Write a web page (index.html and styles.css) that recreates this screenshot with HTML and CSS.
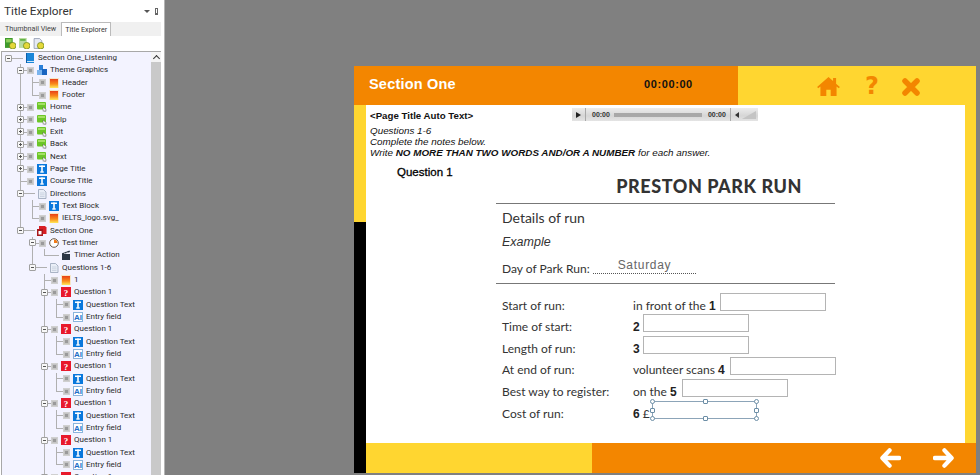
FILE: index.html
```html
<!DOCTYPE html>
<html lang="en">
<head>
<meta charset="utf-8">
<title>Title Explorer</title>
<link rel="stylesheet" href="styles.css">
</head>
<body>
<svg class="defs" aria-hidden="true">
  <defs>
    <linearGradient id="fl" x1="0" y1="0" x2="0" y2="1"><stop offset="0" stop-color="#e8401a"/><stop offset=".55" stop-color="#f98a1a"/><stop offset="1" stop-color="#ffe95a"/></linearGradient>
    <symbol id="book" viewBox="0 0 10 10"><rect x="1" y="0" width="8" height="10" fill="#1a86d8"/><rect x="1" y="8" width="8" height="1" fill="#cfe6f8"/><rect x="1" y="0" width="1" height="10" fill="#0c5ea8"/></symbol>
    <symbol id="theme" viewBox="0 0 10 10"><rect x="2" y="0" width="4" height="5" fill="#2a7fd8"/><rect x="0" y="5" width="5" height="5" fill="#7ab4ee"/><rect x="5" y="4" width="5" height="6" fill="#1864c0"/></symbol>
    <symbol id="flame" viewBox="0 0 10 10"><rect width="10" height="10" fill="#f6e6c8"/><rect x="1" y="1" width="8" height="9" fill="url(#fl)"/></symbol>
    <symbol id="btn" viewBox="0 0 10 10"><rect x="0" y="0" width="9" height="7.500" rx="1" fill="#6cc628"/><rect x="1" y="1" width="7" height="2" fill="#a4e064"/><path d="M6 5l3.500 3-1.500.2.800 1.500-1 .3-.700-1.500-1 .8z" fill="#fff" stroke="#444" stroke-width=".4"/></symbol>
    <symbol id="tee" viewBox="0 0 10 10"><rect width="10" height="10" fill="#0a78dc"/><rect x="2" y="1.500" width="6" height="1.500" fill="#fff"/><rect x="4.200" y="1.500" width="1.600" height="7" fill="#fff"/><rect x="3" y="7.500" width="4" height="1" fill="#fff"/></symbol>
    <symbol id="page" viewBox="0 0 10 10"><path d="M1.500.5h5l2.500 2.500v6.500h-7.500z" fill="#e9eef7" stroke="#97a3b8" stroke-width=".8"/><path d="M3 4h4.500M3 5.800h4.500M3 7.500h4.500" stroke="#b8c2d4" stroke-width=".6"/></symbol>
    <symbol id="sect" viewBox="0 0 10 10"><path d="M2 0h6l1.500 1.500v6.500h-7.500z" fill="#d81e24"/><path d="M0 3h6v7h-6z" fill="#a8181c"/><path d="M1.500 5h3v3.500h-3z" fill="#fff"/></symbol>
    <symbol id="timer" viewBox="0 0 10 10"><circle cx="5" cy="5" r="4.300" fill="#fff" stroke="#6a5a4a"/><path d="M5 5V1.500A3.500 3.500 0 0 1 8.500 5z" fill="#f07a18"/></symbol>
    <symbol id="clap" viewBox="0 0 10 10"><rect x="1" y="4" width="8" height="6" fill="#2c3644"/><path d="M1 3.300L8.500.5l.5 1.500-8 2.500z" fill="#2c3644"/><path d="M3 2.500l1 1.400M5.500 1.600l1 1.400" stroke="#fff" stroke-width=".6"/></symbol>
    <symbol id="quest" viewBox="0 0 10 10"><rect width="10" height="10" fill="#e8192c"/><text x="5" y="8.600" text-anchor="middle" class="qmark">?</text></symbol>
    <symbol id="entry" viewBox="0 0 10 10"><rect x=".5" y=".5" width="9" height="9" fill="#fff" stroke="#8ab4dc"/><text x="1" y="8" class="emark">AI</text></symbol>
    <symbol id="add-g" viewBox="0 0 10 10"><rect x="0" y="0" width="7" height="9" fill="#3f9a2c"/><rect x="1" y="1" width="5" height="3" fill="#8ed05a"/><circle cx="7" cy="7" r="3" fill="#e4d83a" stroke="#5c7a10" stroke-width=".6"/></symbol>
    <symbol id="add-l" viewBox="0 0 10 10"><rect x="0" y="0" width="7" height="9" fill="#b8dca0"/><rect x="1" y="1" width="5" height="1.500" fill="#5cae3c"/><circle cx="7" cy="7" r="3" fill="#e4d83a" stroke="#5c7a10" stroke-width=".6"/></symbol>
    <symbol id="add-p" viewBox="0 0 10 10"><path d="M1 .5h5l2 2v7h-7z" fill="#e6eaf4" stroke="#8a96aa" stroke-width=".7"/><circle cx="7" cy="7" r="3" fill="#e4d83a" stroke="#5c7a10" stroke-width=".6"/></symbol>
  </defs>
</svg>

<div class="app">
  <aside class="panel">
    <header class="panel-head">
      <h1>Title Explorer</h1>
      <span class="panel-ctl"><i class="caret"></i><i class="pin"></i></span>
    </header>
    <nav class="tabs">
      <span class="tab">Thumbnail View</span>
      <span class="tab active">Title Explorer</span>
    </nav>
    <div class="tools">
      <svg class="tool"><use href="#add-g"/></svg>
      <svg class="tool"><use href="#add-l"/></svg>
      <svg class="tool"><use href="#add-p"/></svg>
    </div>
    <div class="tree-wrap">
      <div class="tree">
        <ul class="root">
          <li>
            <div class="row"><i class="exp"></i><i class="stub long"></i><svg class="ic"><use href="#book"/></svg><span>Section One_Listening</span></div>
            <ul>
              <li>
                <div class="row"><i class="exp"></i><i class="stub"></i><i class="state"></i><svg class="ic"><use href="#theme"/></svg><span>Theme Graphics</span></div>
                <ul>
                  <li><div class="row"><i class="stub"></i><i class="state"></i><svg class="ic"><use href="#flame"/></svg><span>Header</span></div></li>
                  <li><div class="row"><i class="stub"></i><i class="state"></i><svg class="ic"><use href="#flame"/></svg><span>Footer</span></div></li>
                </ul>
              </li>
              <li><div class="row"><i class="exp plus"></i><i class="stub"></i><i class="state"></i><svg class="ic"><use href="#btn"/></svg><span>Home</span></div></li>
              <li><div class="row"><i class="exp plus"></i><i class="stub"></i><i class="state"></i><svg class="ic"><use href="#btn"/></svg><span>Help</span></div></li>
              <li><div class="row"><i class="exp plus"></i><i class="stub"></i><i class="state"></i><svg class="ic"><use href="#btn"/></svg><span>Exit</span></div></li>
              <li><div class="row"><i class="exp plus"></i><i class="stub"></i><i class="state"></i><svg class="ic"><use href="#btn"/></svg><span>Back</span></div></li>
              <li><div class="row"><i class="exp plus"></i><i class="stub"></i><i class="state"></i><svg class="ic"><use href="#btn"/></svg><span>Next</span></div></li>
              <li><div class="row"><i class="exp plus"></i><i class="stub"></i><i class="state"></i><svg class="ic"><use href="#tee"/></svg><span>Page Title</span></div></li>
              <li><div class="row"><i class="stub"></i><i class="state"></i><svg class="ic"><use href="#tee"/></svg><span>Course Title</span></div></li>
              <li>
                <div class="row"><i class="exp"></i><i class="stub long"></i><svg class="ic"><use href="#page"/></svg><span>Directions</span></div>
                <ul>
                  <li><div class="row"><i class="stub"></i><i class="state"></i><svg class="ic"><use href="#tee"/></svg><span>Text Block</span></div></li>
                  <li><div class="row"><i class="stub"></i><i class="state"></i><svg class="ic"><use href="#flame"/></svg><span>IELTS_logo.svg_</span></div></li>
                </ul>
              </li>
              <li>
                <div class="row"><i class="exp"></i><i class="stub long"></i><svg class="ic"><use href="#sect"/></svg><span>Section One</span></div>
                <ul>
                  <li>
                    <div class="row"><i class="exp"></i><i class="stub"></i><i class="state"></i><svg class="ic"><use href="#timer"/></svg><span>Test timer</span></div>
                    <ul>
                      <li><div class="row"><i class="stub long"></i><svg class="ic"><use href="#clap"/></svg><span>Timer Action</span></div></li>
                    </ul>
                  </li>
                  <li>
                    <div class="row"><i class="exp"></i><i class="stub long"></i><svg class="ic"><use href="#page"/></svg><span>Questions 1-6</span></div>
                    <ul>
                      <li><div class="row"><i class="stub"></i><i class="state"></i><svg class="ic"><use href="#flame"/></svg><span>1</span></div></li>
                      <li>
                        <div class="row"><i class="exp"></i><i class="stub"></i><i class="state"></i><svg class="ic"><use href="#quest"/></svg><span>Question 1</span></div>
                        <ul>
                          <li><div class="row"><i class="stub"></i><i class="state"></i><svg class="ic"><use href="#tee"/></svg><span>Question Text</span></div></li>
                          <li><div class="row"><i class="stub"></i><i class="state"></i><svg class="ic"><use href="#entry"/></svg><span>Entry field</span></div></li>
                        </ul>
                      </li>
                      <li>
                        <div class="row"><i class="exp"></i><i class="stub"></i><i class="state"></i><svg class="ic"><use href="#quest"/></svg><span>Question 1</span></div>
                        <ul>
                          <li><div class="row"><i class="stub"></i><i class="state"></i><svg class="ic"><use href="#tee"/></svg><span>Question Text</span></div></li>
                          <li><div class="row"><i class="stub"></i><i class="state"></i><svg class="ic"><use href="#entry"/></svg><span>Entry field</span></div></li>
                        </ul>
                      </li>
                      <li>
                        <div class="row"><i class="exp"></i><i class="stub"></i><i class="state"></i><svg class="ic"><use href="#quest"/></svg><span>Question 1</span></div>
                        <ul>
                          <li><div class="row"><i class="stub"></i><i class="state"></i><svg class="ic"><use href="#tee"/></svg><span>Question Text</span></div></li>
                          <li><div class="row"><i class="stub"></i><i class="state"></i><svg class="ic"><use href="#entry"/></svg><span>Entry field</span></div></li>
                        </ul>
                      </li>
                      <li>
                        <div class="row"><i class="exp"></i><i class="stub"></i><i class="state"></i><svg class="ic"><use href="#quest"/></svg><span>Question 1</span></div>
                        <ul>
                          <li><div class="row"><i class="stub"></i><i class="state"></i><svg class="ic"><use href="#tee"/></svg><span>Question Text</span></div></li>
                          <li><div class="row"><i class="stub"></i><i class="state"></i><svg class="ic"><use href="#entry"/></svg><span>Entry field</span></div></li>
                        </ul>
                      </li>
                      <li>
                        <div class="row"><i class="exp"></i><i class="stub"></i><i class="state"></i><svg class="ic"><use href="#quest"/></svg><span>Question 1</span></div>
                        <ul>
                          <li><div class="row"><i class="stub"></i><i class="state"></i><svg class="ic"><use href="#tee"/></svg><span>Question Text</span></div></li>
                          <li><div class="row"><i class="stub"></i><i class="state"></i><svg class="ic"><use href="#entry"/></svg><span>Entry field</span></div></li>
                        </ul>
                      </li>
                      <li>
                        <div class="row"><i class="exp"></i><i class="stub"></i><i class="state"></i><svg class="ic"><use href="#quest"/></svg><span>Question 1</span></div>
                      </li>
                    </ul>
                  </li>
                </ul>
              </li>
            </ul>
          </li>
        </ul>
      </div>
      <div class="scroll"><span class="scroll-up"><i></i></span></div>
    </div>
  </aside>

  <main class="canvas">
    <section class="slide">
      <header class="slide-head">
        <div class="head-main">
          <span class="sec-title">Section One</span>
          <span class="clock">00:00:00</span>
        </div>
        <div class="head-nav">
          <svg class="home" viewBox="0 0 24 20"><path d="M12 0L0 10.500l1.200 1.300L3.500 10v10h6.200v-6.500h4.600V20h6.200V10l2.300 1.800 1.200-1.300-4-3.500V1h-3.200v3.200z" fill="#f38600"/></svg>
          <span class="help">?</span>
          <svg class="close" viewBox="0 0 18 18"><path d="M3 3l12 12M15 3L3 15" stroke="#f38600" stroke-width="5.500" stroke-linecap="round"/></svg>
        </div>
      </header>
      <div class="slide-mid">
        <div class="strip-left"></div>
        <div class="content">
          <div class="title-row">
            <strong class="auto-title">&lt;Page Title Auto Text&gt;</strong>
            <div class="player">
              <span class="pl-play"><i></i></span>
              <span class="pl-time">00:00</span>
              <span class="pl-bar"></span>
              <span class="pl-time">00:00</span>
              <span class="pl-vol"><i></i><b></b></span>
            </div>
          </div>
          <div class="directions">
            <p>Questions 1-6</p>
            <p>Complete the notes below.</p>
            <p>Write <b>NO MORE THAN TWO WORDS AND/OR A NUMBER</b> for each answer.</p>
          </div>
          <h2 class="q-label">Question 1</h2>
          <div class="paper">
            <h3 class="paper-title">PRESTON PARK RUN</h3>
            <div class="paper-top">
              <div class="details">Details of run</div>
              <div class="example">Example</div>
              <div class="day"><span>Day of Park Run:</span><span class="dots"><em>Saturday</em></span></div>
            </div>
            <div class="rows">
              <div class="f-row"><span class="f-l">Start of run:</span><span class="f-v">in front of the&nbsp;<b>1</b><i class="box b1"></i></span></div>
              <div class="f-row"><span class="f-l">Time of start:</span><span class="f-v"><b>2</b><i class="box b2"></i></span></div>
              <div class="f-row"><span class="f-l">Length of run:</span><span class="f-v"><b>3</b><i class="box b2"></i></span></div>
              <div class="f-row"><span class="f-l">At end of run:</span><span class="f-v">volunteer scans&nbsp;<b>4</b><i class="box b4"></i></span></div>
              <div class="f-row"><span class="f-l">Best way to register:</span><span class="f-v">on the&nbsp;<b>5</b><i class="box b5"></i></span></div>
              <div class="f-row"><span class="f-l">Cost of run:</span><span class="f-v"><b>6</b>&nbsp;£<i class="box sel"><u class="h tl"></u><u class="h tm"></u><u class="h tr"></u><u class="h ml"></u><u class="h mr"></u><u class="h bl"></u><u class="h bm"></u><u class="h br"></u></i></span></div>
            </div>
          </div>
        </div>
        <div class="strip-right"></div>
      </div>
      <footer class="slide-foot">
        <div class="foot-black"></div>
        <div class="foot-yellow"></div>
        <div class="foot-orange">
          <svg class="arrow" viewBox="0 0 22 20"><path d="M10 2L2.500 10l7.500 8M3.500 10H20" fill="none" stroke="#fff" stroke-width="4.500" stroke-linecap="round" stroke-linejoin="round"/></svg>
          <svg class="arrow" viewBox="0 0 22 20"><path d="M12 2l7.500 8-7.500 8M18.500 10H2" fill="none" stroke="#fff" stroke-width="4.500" stroke-linecap="round" stroke-linejoin="round"/></svg>
        </div>
      </footer>
    </section>
  </main>
</div>
</body>
</html>
```

FILE: styles.css
```css
* { box-sizing: border-box; }
html, body { margin: 0; padding: 0; }
body { width: 980px; height: 475px; overflow: hidden; background: #808080; font-family: "Liberation Sans", Arial, sans-serif; }
.defs { width: 0; height: 0; display: block; }
.qmark { font: bold 9px "Liberation Serif", serif; fill: #fff; }
.emark { font: bold 8px "Liberation Sans", sans-serif; fill: #1e6ec8; }

.app { display: flex; width: 980px; height: 475px; }

/* Left panel */
.panel { width: 165px; height: 475px; flex: none; background: #fff; border-right: 1px solid #b4b4b4; display: flex; flex-direction: column; font-family: Roboto, "Open Sans", sans-serif; color: #222; }
.panel-head { height: 22px; display: flex; align-items: center; justify-content: space-between; padding: 0 6px 0 4px; flex: none; }
.panel-head h1 { margin: 0; font-size: 11.800px; font-weight: 400; color: #333; line-height: 22px; }
.panel-ctl { display: flex; align-items: center; gap: 5px; }
.caret { width: 0; height: 0; border: 3px solid transparent; border-top: 3px solid #555; border-bottom: 0; }
.pin { width: 3px; height: 7px; border: 1px solid #666; border-bottom-width: 2px; }
.tabs { height: 14px; width: 161px; flex: none; background: #f0f0f0; display: flex; padding-left: 5px; font-size: 7.200px; line-height: 14px; color: #444; }
.tab { margin-right: 5px; white-space: nowrap; }
.tab.active { background: #fff; border: 1px solid #bbb; border-bottom: 0; padding: 0 3px; line-height: 13px; color: #333; margin-right: 0; height: 14px; }
.tools { height: 15px; flex: none; display: flex; align-items: center; gap: 3px; padding-left: 5px; }
.tool { width: 11px; height: 11px; }
.tree-wrap { flex: 1; min-height: 0; width: 161px; display: flex; overflow: hidden; }
.tree { width: 150px; margin-left: 1px; flex: none; background: #f3f3ff; border: 1px solid #a8a8a8; border-bottom: 0; border-right: 0; overflow: hidden; }
.scroll { width: 10px; flex: none; background: #c9c9c9; border-top: 1px solid #a8a8a8; }
.scroll-up { display: flex; height: 10px; background: #f4f4f4; align-items: center; justify-content: center; }
.scroll-up i { width: 5px; height: 5px; border: solid #333; border-width: 1px 0 0 1px; transform: rotate(45deg); margin-top: 3px; }

.tree ul { list-style: none; margin: 0 0 0 12px; padding: 0; }
.tree ul.root { margin-left: 6px; }
.tree li { position: relative; }
.tree li::before { content: ""; position: absolute; left: 0; top: 0; bottom: 0; width: 1px; background: #b0b0b0; }
.tree li:last-child::before { bottom: auto; height: 6px; }
.tree ul.root > li::before { display: none; }
.row { height: 12.330px; display: flex; align-items: center; white-space: nowrap; font-size: 8px; line-height: 12px; position: relative; color: #2a2a2a; }
.stub { width: 7px; height: 1px; background: #b0b0b0; flex: none; }
.stub.long { width: 15px; margin-right: 2px; }
.state { width: 7px; height: 7px; flex: none; background: #9a9a9a; border: 1px solid #d0d0d0; box-shadow: inset 0 0 0 1px #c4c4c4; }
.ic { width: 10px; height: 10px; margin-left: 3px; flex: none; }
.stub.long + .ic { margin-left: 0; }
.row span { margin-left: 3px; }
.exp { position: absolute; left: -3px; top: 2.500px; width: 7px; height: 7px; background: #f8f8f8; border: 1px solid #a0a0a0; border-radius: 1px; z-index: 1; }
.exp::before { content: ""; position: absolute; left: 1px; top: 2px; width: 3px; height: 1px; background: #555; }
.exp.plus::after { content: ""; position: absolute; left: 2px; top: 1px; width: 1px; height: 3px; background: #555; }

/* Canvas and slide */
.canvas { flex: 1; padding: 66px 0 0 189px; min-width: 0; }
.slide { width: 622px; height: 407px; display: flex; flex-direction: column; background: #fff; }
.slide-head { height: 39px; flex: none; display: flex; }
.head-main { width: 384px; background: #f38600; display: flex; align-items: center; flex: none; padding: 0 0 3px 15px; }
.sec-title { width: 275px; color: #fff; font-size: 14.500px; font-weight: 700; letter-spacing: .2px; }
.clock { font-size: 11px; font-weight: 700; color: #111; letter-spacing: .6px; }
.head-nav { flex: 1; background: #ffd630; display: flex; align-items: center; padding-left: 79px; }
.home { width: 23px; height: 19px; margin-top: 1px; }
.help { width: 16px; margin-left: 24px; color: #f38600; font-family: "DejaVu Sans", sans-serif; font-size: 24px; font-weight: 700; line-height: 26px; text-align: center; }
.close { width: 18px; height: 18px; margin-left: 22px; margin-top: 2px; }

.slide-mid { flex: 1; min-height: 0; display: flex; }
.strip-left { width: 12px; flex: none; background: linear-gradient(#ffd630 0 117px, #000 117px); }
.strip-right { width: 11px; flex: none; background: #ffd630; }
.content { flex: 1; min-width: 0; background: #fff; padding: 3px 0 0 4px; overflow: hidden; }

.title-row { height: 14px; display: flex; align-items: flex-start; }
.auto-title { width: 202px; flex: none; font-size: 9.700px; line-height: 14px; padding-top: 1px; color: #111; }
.player { width: 186px; height: 13px; flex: none; display: flex; align-items: center; background: linear-gradient(#ececec, #d6d6d6 60%, #e4e4e4); font-size: 7px; color: #333; font-weight: 700; }
.pl-play { width: 14px; height: 13px; flex: none; border-right: 1px solid #aaa; display: flex; align-items: center; justify-content: center; }
.pl-play i { border: 3px solid transparent; border-left: 5px solid #222; border-right: 0; }
.pl-time { margin: 0 4px 0 6px; }
.pl-bar { width: 88px; height: 4px; background: #a8a8a8; flex: none; }
.pl-vol { flex: 1; height: 13px; border-left: 1px solid #aaa; display: flex; align-items: center; padding-left: 4px; gap: 3px; }
.pl-vol i { border: 3px solid transparent; border-right: 4px solid #333; border-left: 0; }
.pl-vol b { width: 0; height: 0; border-bottom: 8px solid #c4c4c4; border-left: 14px solid transparent; }

.directions { margin-top: 3px; font-size: 9.850px; line-height: 11px; font-style: italic; color: #111; }
.directions p { margin: 0; }
.q-label { margin: 8px 0 0 27px; font-size: 11.500px; line-height: 13px; font-weight: 400; color: #000; -webkit-text-stroke: .3px #000; }

.paper { width: 339px; margin: 0 0 0 126px; font-family: Lato, "Open Sans", sans-serif; color: #333; }
.paper-title { margin: 0; height: 25px; border-bottom: 1px solid #777; text-align: right; padding-right: 33px; font-size: 18px; line-height: 15px; font-weight: 900; color: #333; letter-spacing: .55px; }
.paper-top { height: 80px; border-bottom: 1px solid #777; padding-left: 6px; }
.details { font-size: 14px; line-height: 18px; padding-top: 5px; height: 26px; }
.example { font-family: "Liberation Sans", sans-serif; font-style: italic; font-size: 12.500px; line-height: 15px; height: 26px; margin-top: 5px; }
.day { display: flex; font-size: 12px; line-height: 15px; align-items: flex-start; }
.dots { width: 103px; height: 13px; margin-left: 3px; border-bottom: 1px dotted #555; position: relative; font-family: "Liberation Sans", sans-serif; }
.dots em { position: absolute; left: 25px; top: -3px; font-style: normal; font-size: 12px; letter-spacing: .7px; color: #666; }

.rows { padding: 8px 0 0 6px; }
.f-row { height: 21.600px; display: flex; align-items: flex-end; font-size: 12px; line-height: 14px; white-space: nowrap; }
.f-l { width: 131px; flex: none; padding-bottom: 1px; }
.f-v { display: flex; align-items: flex-end; padding-bottom: 1px; position: relative; }
.f-v b { font-family: "Liberation Sans", sans-serif; color: #222; }
.box { display: block; height: 18px; width: 106px; background: #fff; border: 1px solid #b4b4b4; margin: 0 0 2px 3px; }
.box.b1 { margin-left: 4px; }
.box.b4 { margin-left: 5px; }
.box.b5 { margin-left: 5px; }
.box.sel { position: relative; width: 105px; margin-left: 2px; border: 1px solid #8ca4b8; background: transparent; }
.h { position: absolute; width: 5px; height: 5px; background: #fff; border: 1px solid #6c8ea6; border-radius: 50%; }
.h.tm, .h.bm, .h.ml, .h.mr { border-radius: 1px; }
.tl { left: -3px; top: -3px; } .tm { left: 50px; top: -3px; } .tr { right: -3px; top: -3px; }
.ml { left: -3px; top: 6px; } .mr { right: -3px; top: 6px; }
.bl { left: -3px; bottom: -3px; } .bm { left: 50px; bottom: -3px; } .br { right: -3px; bottom: -3px; }

.slide-foot { height: 30px; flex: none; display: flex; }
.foot-black { width: 12px; background: #000; flex: none; }
.foot-yellow { width: 226px; background: #ffd630; flex: none; }
.foot-orange { flex: 1; background: #f38600; display: flex; align-items: center; justify-content: flex-end; gap: 32px; padding-right: 22px; }
.arrow { width: 21px; height: 20px; }
```
